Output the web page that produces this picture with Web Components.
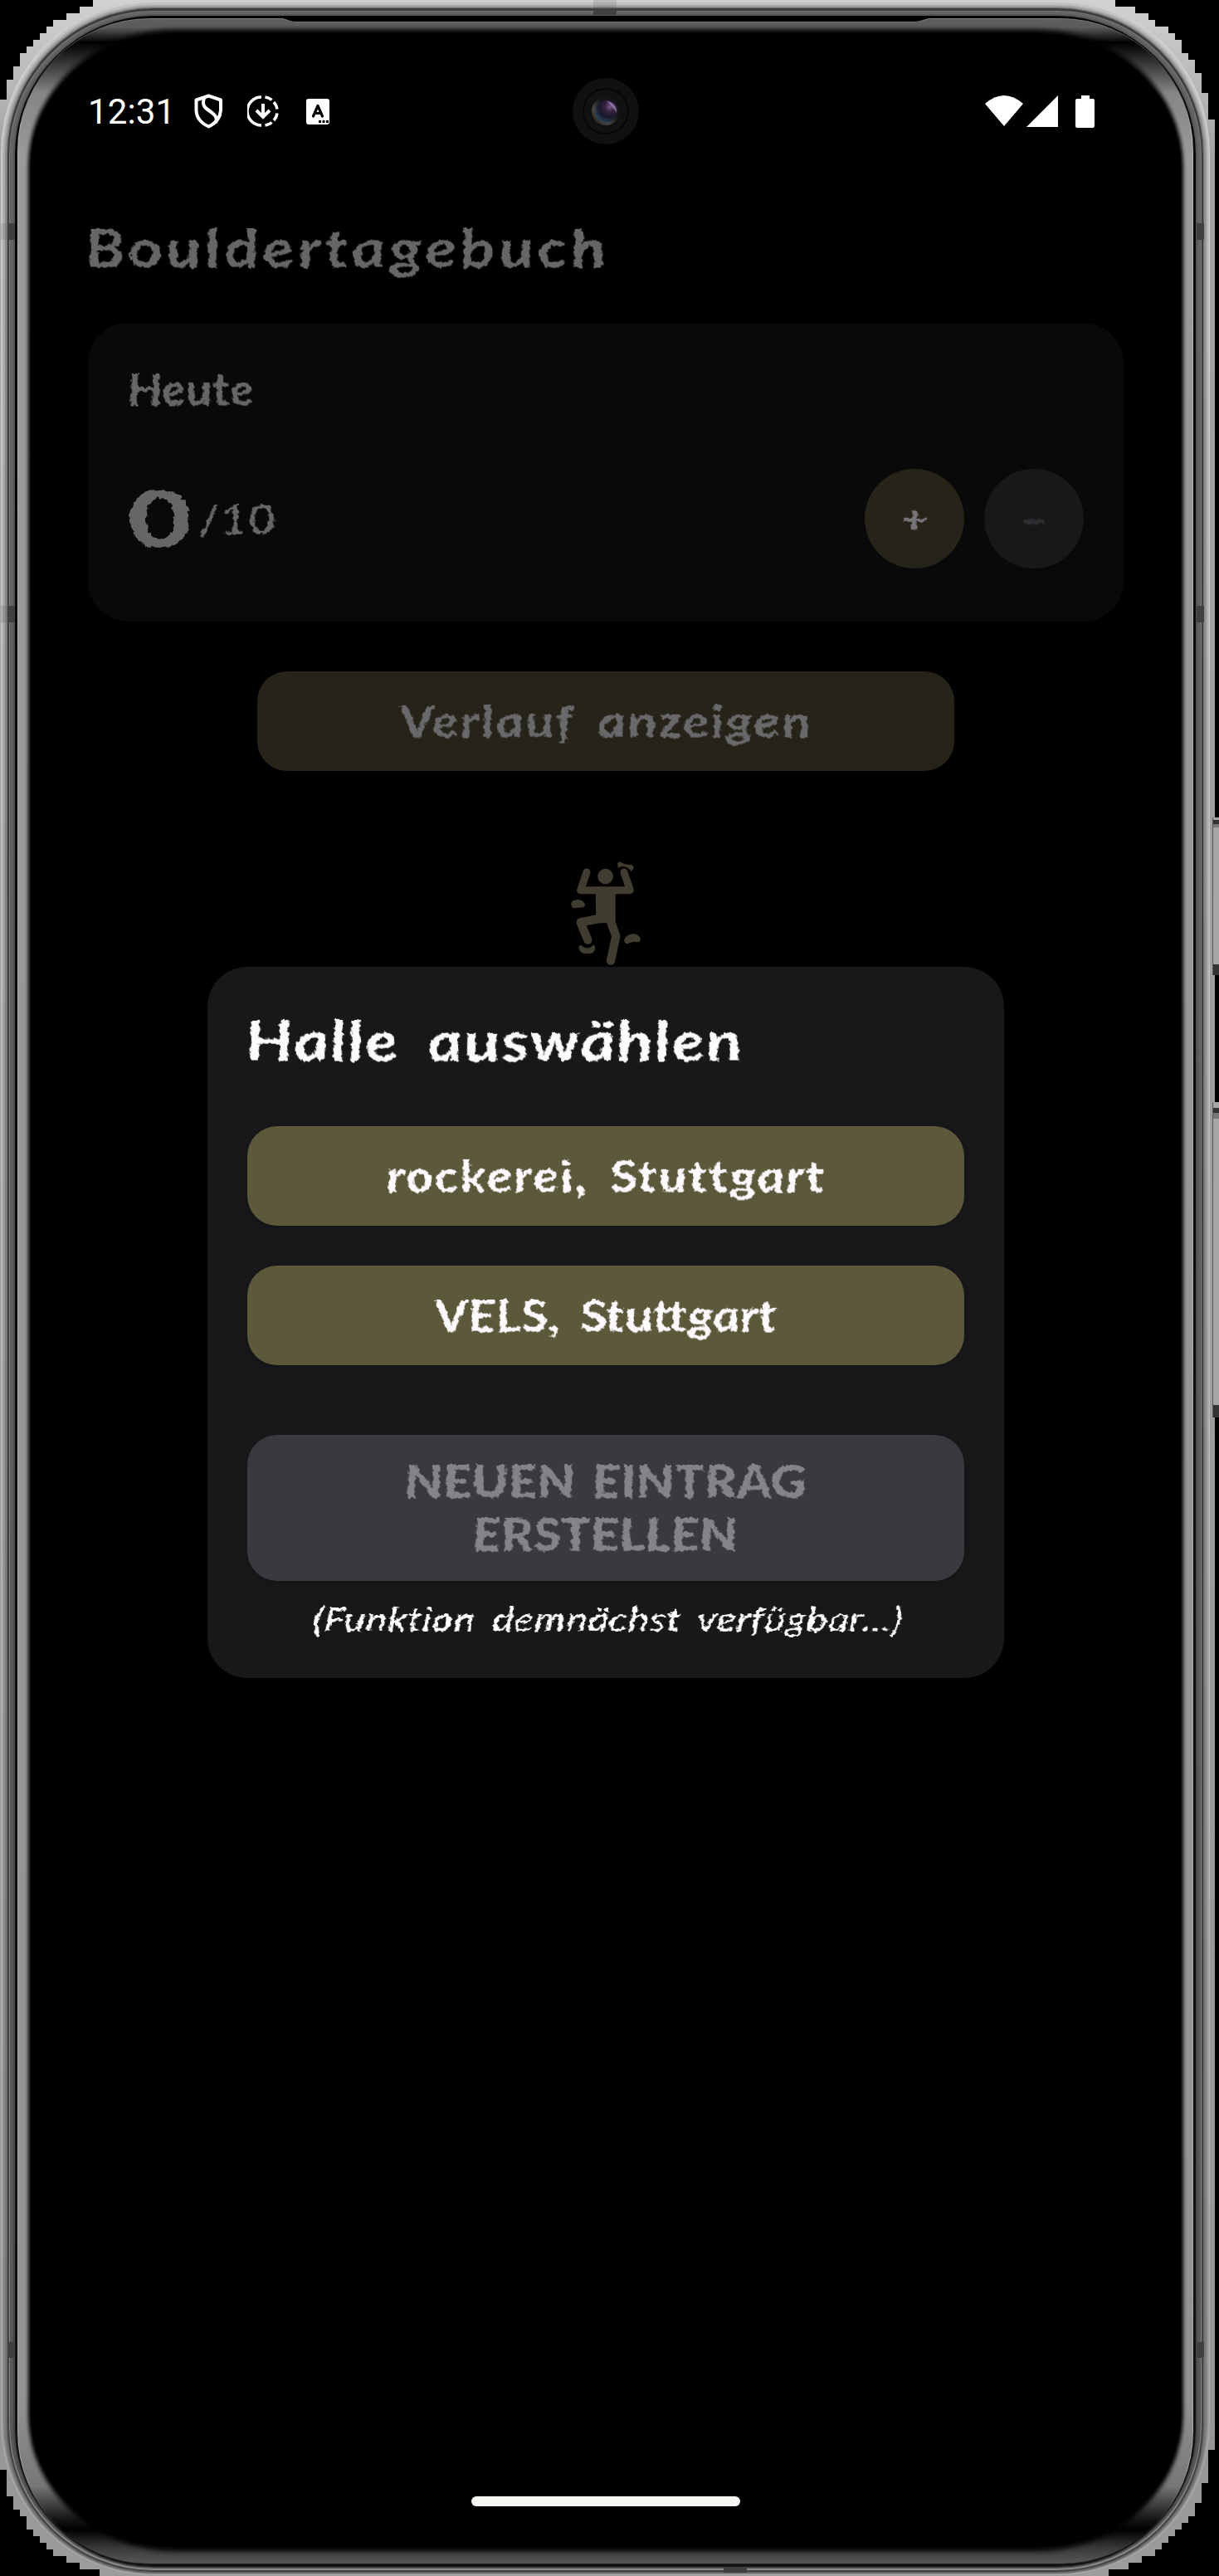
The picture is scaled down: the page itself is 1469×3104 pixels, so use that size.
<!DOCTYPE html>
<html lang="de">
<head>
<meta charset="utf-8">
<title>Bouldertagebuch</title>
<style>
html,body{margin:0;background:#000}
body{width:1469px;height:3104px;overflow:hidden;font-family:Lato,"Open Sans",sans-serif}
</style>
</head>
<body>
<phone-frame>
  <status-bar></status-bar>
  <diary-screen>
    <chalk-text slot="title" size="65" width="627" line="80">Bouldertagebuch</chalk-text>
    <today-card></today-card>
    <wide-button tone="dim"><chalk-text size="54" width="495" line="64">Verlauf anzeigen</chalk-text></wide-button>
    <climber-icon></climber-icon>
  </diary-screen>
  <hall-dialog slot="overlay">
    <chalk-text slot="title" size="67" width="598" line="80">Halle auswählen</chalk-text>
    <wide-button><chalk-text size="53" width="525" line="64">rockerei, Stuttgart</chalk-text></wide-button>
    <wide-button><chalk-text size="53" width="413" line="64">VELS, Stuttgart</chalk-text></wide-button>
    <wide-button tone="off"><chalk-text heavy size="54" width="484" line="64">NEUEN EINTRAG</chalk-text><chalk-text heavy size="54" width="319" line="64">ERSTELLEN</chalk-text></wide-button>
    <chalk-text slot="note" slanted size="40" width="710" line="48">(Funktion demnächst verfügbar...)</chalk-text>
  </hall-dialog>
</phone-frame>
<script>
const define = (name, html, init) => customElements.define(name, class extends HTMLElement {
  connectedCallback() {
    if (this.shadowRoot) return;
    this.attachShadow({ mode: 'open' }).innerHTML = html;
    if (init) init.call(this);
  }
});

define('phone-frame', `
<style>
:host{display:block;position:relative;width:1469px;height:3104px;overflow:hidden}
.bezel{position:absolute;inset:0}
.screen{position:relative;display:flex;flex-direction:column;box-sizing:border-box;height:3104px;padding-top:90px}
.home{width:324px;height:12px;border-radius:6px;background:#f7f6f2;margin:auto 0 84px 568px}
.camera{position:absolute;left:690px;top:94px}
</style>
<svg class="bezel" width="1469" height="3104" viewBox="0 0 1469 3104">
  <defs>
    <linearGradient id="steps" x1="0" y1="0" x2="0" y2="1"><stop offset="0" stop-color="#d2d2d2"/><stop offset=".06" stop-color="#a2a2a2"/><stop offset=".95" stop-color="#969696"/><stop offset="1" stop-color="#9c9c9c"/></linearGradient>
    <linearGradient id="glow" gradientUnits="userSpaceOnUse" x1="0" y1="0" x2="0" y2="3104">
      <stop offset="0" stop-color="#646464"/><stop offset=".0105" stop-color="#5c5c5c"/><stop offset=".0165" stop-color="#000"/><stop offset=".019" stop-color="#111"/><stop offset=".036" stop-color="#858585"/><stop offset=".06" stop-color="#9a9a9a"/>
      <stop offset=".93" stop-color="#949494"/><stop offset=".965" stop-color="#777"/><stop offset=".978" stop-color="#151515"/><stop offset=".982" stop-color="#000"/><stop offset=".989" stop-color="#383838"/><stop offset=".994" stop-color="#525252"/><stop offset="1" stop-color="#555"/>
    </linearGradient>
    <linearGradient id="rim" gradientUnits="userSpaceOnUse" x1="0" y1="0" x2="0" y2="3104"><stop offset="0" stop-color="#888"/><stop offset=".01" stop-color="#777"/><stop offset=".03" stop-color="#222"/><stop offset=".05" stop-color="#b5b5b5"/><stop offset=".96" stop-color="#aaa"/><stop offset=".98" stop-color="#222"/><stop offset="1" stop-color="#222"/></linearGradient>
    <filter id="soft"><feGaussianBlur stdDeviation="2.2 3"/></filter>
    <clipPath id="inside"><rect x="22" y="23" width="1415" height="3066" rx="158"/></clipPath>
  </defs>
  <path fill="url(#steps)" d="M112 0V8H96V16H80V24H64V32H56V40H48V48H40V56H32V64H24V80H16V96H8V120H0V2976H8V3008H16V3024H24V3032H32V3048H40V3056H48V3064H56V3072H64V3080H80V3088H96V3096H120V3104H1336V3096H1360V3088H1376V3080H1392V3072H1400V3064H1408V3056H1416V3048H1424V3040H1432V3032H1440V3016H1448V2992H1456V2952H1464V144H1456V112H1448V88H1440V72H1432V64H1424V48H1416V40H1408V32H1392V24H1384V16H1368V8H1344V0Z"/>
  <g id="bands"></g>
  <rect x="21" y="22" width="1417" height="3068" rx="160" fill="url(#rim)"/>
  <rect x="22" y="23" width="1415" height="3066" rx="158" fill="url(#glow)"/>
  <g clip-path="url(#inside)"><rect x="34" y="36" width="1392" height="3038" rx="178" ry="164" fill="#000" filter="url(#soft)"/><rect x="37" y="41" width="1386" height="3027" rx="172" ry="160" fill="#000"/></g>
  <path d="M338 22C345 22 347 26 356 27H1102C1112 26 1115 22 1122 22V19H338Z" fill="#000"/>
  <path d="M338 22.5C345 22.500 347 26 356 26.500H1102C1112 26 1115 22.500 1122 22.500" fill="none" stroke="#777"/>
  <g fill="#404040"><path d="M10 269h8v20h-8zM10 730h8v20h-8zM10 2822h8v19h-8zM1442 269h9v20h-9zM1442 730h9v20h-9zM1442 2822h9v19h-9zM715 12h28v6h-28zM872 3093h28v7h-28z"/><path opacity=".15" d="M1 269h9v20H1zM1 730h9v20H1zM715 0h28v12h-28z"/></g>
  <g><rect x="1460" y="985" width="9" height="190" fill="#a5a5a5"/><path fill="#333" d="M1461 988h8v5h-8zM1461 1162h8v13h-8z"/><path fill="#777" d="M1461 993h8v4h-8z"/>
  <rect x="1460" y="1328" width="9" height="380" fill="#a5a5a5"/><path fill="#333" d="M1461 1335h8v6h-8zM1461 1693h8v15h-8z"/><path fill="#777" d="M1461 1341h8v7h-8z"/><path stroke="#555" d="M1461.500 985v190M1461.500 1328v380"/></g>
</svg>
<svg class="camera" width="80" height="80" viewBox="-40 -40 80 80">
  <defs><radialGradient id="lens" cx=".65" cy=".3" r=".75"><stop offset="0" stop-color="#77588b"/><stop offset=".3" stop-color="#35223f"/><stop offset=".65" stop-color="#17182a"/><stop offset="1" stop-color="#25465a"/></radialGradient>
  <linearGradient id="ring" x1="0" y1="1" x2="1" y2="0"><stop offset="0" stop-color="#181818"/><stop offset=".33" stop-color="#484644"/><stop offset=".6" stop-color="#151515"/><stop offset="1" stop-color="#111"/></linearGradient></defs>
  <circle r="40" fill="#101010"/><circle r="27" fill="#111" stroke="#060606" stroke-width="2"/><circle r="17" fill="url(#ring)"/><circle cx="1" r="13.500" fill="url(#lens)"/><path d="M1-12A13 13 0 0 1 13 2Q9-5 1-12" fill="#a58abd" opacity=".7"/>
</svg>
<div class="screen"><slot></slot><div class="home"></div></div>
<slot name="overlay"></slot>
`, function () {
  // [side inset, top inset, bottom inset, radius, upper colour, lower colour]
  const bands = [
    [1,0,1,184,'#cfcfcf','#aaa'],[2,3,2,183,'#c0c0c0','#999'],[4,6,2.5,181,'#a8a8a8','#808080'],[6,8,3,179,'#909090','#747474'],[8,9,4,177,'#757575','#606060'],
    [9,10,5,176,'#3e3e3e','#444'],[11,13,7,174,'#777','#888'],[12,14,9,173,'#646464','#555'],[16,17,10,169,'#565656','#444'],[18,19,11,167,'#080808','#151515'],[20,21,13.5,164,'#000','#080808']];
  this.shadowRoot.getElementById('bands').innerHTML = bands.map(([s,t,b,r,c,d],i) =>
    `<linearGradient id="b${i}" x1="0" y1="0" x2="0" y2="1"><stop offset=".03" stop-color="${c}"/><stop offset="1" stop-color="${d}"/></linearGradient>
     <rect x="${s}" y="${t}" width="${1459-2*s}" height="${3104-t-b}" rx="${r}" fill="url(#b${i})"/>`).join('');
});

define('status-bar', `
<style>
:host{display:flex;align-items:center;height:88px;padding:0 150px 0 106px;color:#fff;font:400 42px/88px Roboto,sans-serif}
.time{width:128px;letter-spacing:.1px;padding-top:2px}
svg{display:block}
.dl{margin-left:29px}.a{margin-left:33px}.wifi{margin-left:auto}.sig{margin-left:4px}.bat{margin-left:21px}
</style>
<span class="time">12:31</span>
<svg width="35" height="42" viewBox="0 0 35 42" fill="none" stroke="#fff" stroke-width="4" stroke-linejoin="round"><path d="M17.500 2.500 32 7.500V20Q31 33 17.500 39.500Q3 33 2.500 20V7.500Z"/><path d="M12 5C9 14 13 17 19 21C26 26 28 29 26 35"/></svg>
<svg class="dl" width="38" height="38" viewBox="-19 -19 38 38" fill="none" stroke="#fff"><path stroke-width="3.500" d="M-2-17A17 17 0 0 0-2 17M2.500-17Q7.500-16.300 10.500-13.400M13-11Q16.500-7 17-2.500M17 2.500Q16.500 7 13 11M10.500 13.400Q7.500 16.300 2.500 17"/><path stroke-width="4" d="M0-9V5M-8-1 0 7 8-1"/></svg>
<svg class="a" width="28" height="31" viewBox="0 0 28 31"><rect width="28" height="31" rx="3" fill="#fff"/><path d="M8.500 21 14 8.500 19.500 21M10 17.500h8" fill="none" stroke="#000" stroke-width="3.200" stroke-linejoin="round" stroke-linecap="round"/><path d="M15 26h3v3h-3zM19.500 26h3v3h-3zM24 26h3v3h-3z"/></svg>
<svg class="wifi" width="46" height="38" viewBox="0 0 46 38"><path d="M0 10Q23-10 46 10L23 37Z" fill="#fff"/></svg>
<svg class="sig" width="38" height="38" viewBox="0 0 38 38"><path d="M38 0V38H0Z" fill="#fff"/></svg>
<svg class="bat" width="23" height="39" viewBox="0 0 23 39"><path d="M7 0h10v4h4a2 2 0 0 1 2 2v31a2 2 0 0 1-2 2H2a2 2 0 0 1-2-2V6a2 2 0 0 1 2-2h5z" fill="#fff"/></svg>
`);

define('diary-screen', `
<style>
:host{display:flex;flex-direction:column;padding:80px 115px 0 106px;color:#666568}
header{display:flex;height:80px;margin-bottom:51px}
header ::slotted(*){margin-left:-3px}
::slotted(wide-button){margin:60px 204px 0}
::slotted(climber-icon){align-self:flex-start;margin:107px 0 0 580px}
</style>
<header><slot name="title"></slot></header><slot></slot>
`);

define('today-card', `
<style>
:host{display:flex;flex-direction:column;box-sizing:border-box;height:360px;padding:48px;border-radius:48px;background:#090909}
.row{display:flex;align-items:center;margin-top:64px;height:120px}
.count{display:flex;align-items:center;flex:1}
.count chalk-text{align-self:center}
.round{display:flex;align-items:center;justify-content:center;width:120px;height:120px;border-radius:50%;background:#262419;color:#77757a}
.round chalk-text{align-self:center}
.minus{margin-left:24px;background:#181818;color:#2f2e30}
.big{width:86px;margin-top:-5px}
</style>
<chalk-text size="54" width="152" line="64">Heute</chalk-text>
<div class="row"><div class="count"><span class="big"><chalk-text heavy plain stretch="1.42" size="94" line="96">0</chalk-text></span><chalk-text light size="50" width="93" line="60">/10</chalk-text></div>
<div class="round"><chalk-text stretch="1.3" size="46" line="64">+</chalk-text></div><div class="round minus"><chalk-text heavy stretch="1.1" size="60" line="56">–</chalk-text></div></div>
`);

define('wide-button', `
<style>
:host{display:flex;flex-direction:column;align-items:center;justify-content:center;box-sizing:border-box;height:120px;border-radius:36px;background:#5c583a;color:#fcfafd;box-shadow:0 3px 6px rgba(0,0,0,.15)}
:host([tone=dim]){background:#262419;color:#69676a;box-shadow:none}
:host([tone=off]){height:176px;background:#3a393d;color:#848388;margin-top:36px}
</style><slot></slot>
`);

define('climber-icon', `
<style>:host{display:block;width:90px;height:130px}svg{display:block}</style>
<svg width="90" height="130" viewBox="78 48 270 390" fill="#403d30">
<circle cx="209" cy="108" r="28"/>
<path d="M141 93 119 158H298L276 93" fill="none" stroke="#403d30" stroke-width="27" stroke-linecap="round" stroke-linejoin="round"/>
<path d="M173 150H245V270L236 277H175Z"/>
<path d="M190 260 119 274 145 338M225 262 247 324 228 413" fill="none" stroke="#403d30" stroke-width="31" stroke-linecap="round" stroke-linejoin="round"/>
<path d="M253 60Q258 52 266 58Q281 68 303 65Q313 70 310 80L302 90Q291 72 270 72Q258 73 254 78ZM85 211Q83 196 98 194Q119 188 132 203Q139 214 130 220L96 223Q86 222 85 211ZM112 362Q119 353 126 361Q141 373 158 362Q168 350 172 364Q171 388 149 387Q112 391 112 362ZM276 338Q281 325 296 318Q323 309 335 331Q338 345 325 346Q304 342 293 350Q278 355 276 338Z"/>
</svg>
`);

define('hall-dialog', `
<style>
:host{position:absolute;left:250px;top:1165px;width:960px;height:857px;box-sizing:border-box;padding:48px 48px 0;border-radius:48px;background:#18181a;color:#fcfafd;display:flex;flex-direction:column;gap:48px}
header{display:flex;height:96px}
header ::slotted(*){margin-left:-2px}
footer{display:flex;justify-content:center;height:48px;margin:-26px 0 0 4px;color:#fff}
</style>
<header><slot name="title"></slot></header><slot></slot><footer><slot name="note"></slot></footer>
`);

// Lettering: an upright cursive cut, stretched and letter-spaced to its given width, with a rough chalk edge.
define('chalk-text', `<style>
:host{display:flex;white-space:nowrap;font-weight:700;font-style:italic;align-self:flex-start;word-spacing:.18em}
:host([heavy]){font-weight:900;word-spacing:.1em}
:host([light]){font-weight:500}
:host([slanted]){font-weight:500}
:host([plain]){font-style:normal}
span{display:block;transform-origin:0 60%;filter:url(#chalk)}
svg{position:absolute;width:0;height:0}
</style><svg><filter id="chalk" x="-10%" y="-10%" width="120%" height="120%"><feTurbulence type="fractalNoise" baseFrequency=".22 .16" numOctaves="2" seed="7" result="n"/><feDisplacementMap in="SourceGraphic" in2="n" scale="6" xChannelSelector="R" yChannelSelector="G"/></filter></svg><span><slot></slot></span>`, function () {
  const span = this.shadowRoot.querySelector('span');
  this.style.fontFamily = 'Lato, "Open Sans", sans-serif';
  this.style.fontSize = this.getAttribute('size') + 'px';
  this.style.lineHeight = this.getAttribute('line') + 'px';
  if (this.parentElement && this.parentElement.localName === 'wide-button') this.style.alignSelf = 'center';
  const n = this.textContent.length, natural = span.offsetWidth;
  let stretch = +this.getAttribute('stretch');
  if (stretch) {
    span.style.marginRight = natural * (stretch - 1) + 'px';
  } else {
    const target = +this.getAttribute('width');
    stretch = Math.max(1, Math.min(1.2, target / natural));
    const gap = (target / stretch - natural) / (n - 1);
    this.style.letterSpacing = gap + 'px';
    span.style.marginRight = target - target / stretch - gap + 'px';
  }
  const skew = this.hasAttribute('plain') ? 0 : this.hasAttribute('slanted') ? -4 : 7;
  span.style.transform = `skewX(${skew}deg) scaleX(${stretch})`;
});
</script>
</body>
</html>
